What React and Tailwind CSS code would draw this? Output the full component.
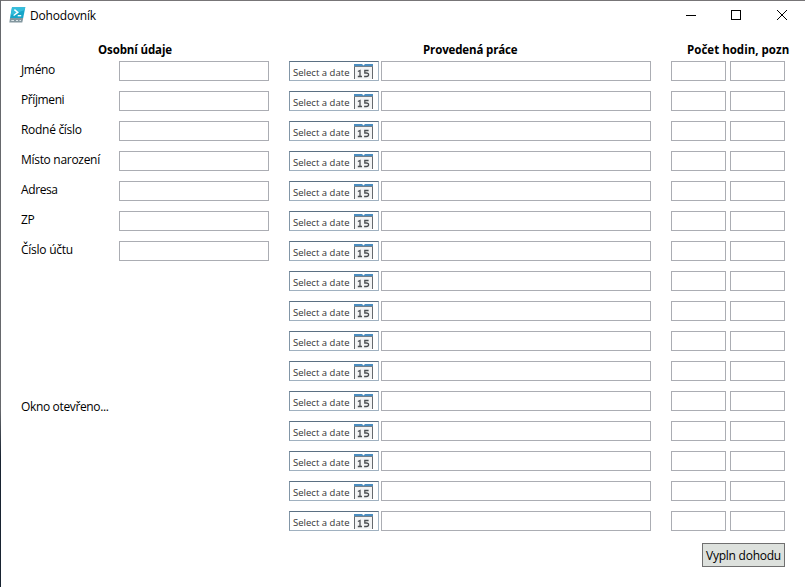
import React from "react";

const fields = [
  ["Jméno", "tracking-[-0.35px]"],
  ["Příjmeni", "tracking-[-0.4px]"],
  ["Rodné číslo", "tracking-[-0.3px]"],
  ["Místo narození", "tracking-[-0.3px]"],
  ["Adresa", "tracking-[-0.4px]"],
  ["ZP", "tracking-[-0.3px]"],
  ["Číslo účtu", "tracking-[-0.25px]"],
];
const rows = Array.from({ length: 16 }, (_, i) => i);

function Box({ className }) {
  return <div className={`h-5 shrink-0 border border-[#abadb3] bg-white ${className}`} />;
}

function PowerShellIcon() {
  return (
    <svg width="17" height="17" viewBox="0 0 17 17" className="-mt-px shrink-0">
      <path d="M3 0.3H16.3L14.2 11H1Z" fill="#16a5c8" />
      <path d="M3 0.3H16.3L15.7 3L1.8 8Z" fill="#35bddb" />
      <path d="M1 11H14.2L13.3 15.5H0.3Z" fill="#83979f" />
      <path d="M2.3 13.5H5M7 13.5H9M10.5 13.5H12" stroke="#dbe5e8" strokeWidth="1.2" />
      <path d="M5.4 2.6L8.8 5.4L4.6 8.5" fill="none" stroke="#fff" strokeWidth="1.4" />
      <path d="M8.7 8.7H12.2" stroke="#fff" strokeWidth="1.3" />
    </svg>
  );
}

function CalendarIcon() {
  return (
    <svg width="19" height="15" viewBox="0 0 19 15" className="mt-[2px] shrink-0">
      <rect x="0.5" y="2" width="18" height="13" fill="#f3f4f5" />
      <rect x="0" y="0" width="19" height="2" fill="#4a8dc0" />
      <path d="M8 0H11L9.5 1.6Z" fill="#fff" />
      <path d="M0.5 2V15M18.5 2V15" stroke="#65696d" />
      <path d="M0 2.5H19" stroke="#75818a" />
      <path d="M3.9 7.5L6 6.5V12.3M3.8 12.5H8" fill="none" stroke="#4d5053" strokeWidth="1.3" />
      <path d="M14.6 6.5H10.8V9H12.4C15.4 9 15.3 12.5 12.4 12.5H10.1" fill="none" stroke="#4d5053" strokeWidth="1.3" />
    </svg>
  );
}

function DatePicker() {
  return (
    <div className="flex h-5 w-[90px] shrink-0 items-start border border-t-[#5b7083] border-r-[#a4b5c4] border-b-[#a0b1c0] border-l-[#8296a7] bg-white pl-[3px]">
      <span className="mt-[4px] w-[61px] text-[9.5px] leading-[14px] tracking-[0.02px] whitespace-nowrap text-[#333]">Select a date</span>
      <CalendarIcon />
    </div>
  );
}

export default function App() {
  return (
    <div className="flex h-[587px] w-[805px] overflow-hidden bg-white font-['Open_Sans','Noto_Sans',sans-serif] text-[12px] text-black">
      <div className="w-px shrink-0 bg-linear-to-b from-[#66686c] from-70% to-[#182331] to-78%" />
      <div className="flex w-[804px] shrink-0 flex-col border-t border-[#777577]">
        <header className="flex h-[29px] shrink-0 items-center pl-2">
          <PowerShellIcon />
          <span className="ml-1 pt-px leading-4 tracking-[-0.18px]">Dohodovník</span>
          <svg width="126" height="29" viewBox="0 0 126 29" className="ml-auto" fill="none" stroke="#000" shapeRendering="crispEdges">
            <path d="M7 14.5H17" />
            <rect x="52.5" y="9.5" width="9" height="9" />
            <path d="M98 9L108 19M108 9L98 19" shapeRendering="auto" />
          </svg>
        </header>
        <div className="flex h-[31px] shrink-0 items-start pt-[12px] text-[11.5px] leading-4 font-bold whitespace-nowrap">
          <span className="ml-[97px] w-[325px] tracking-[-0.12px]">Osobní údaje</span>
          <span className="w-[264px] tracking-[-0.14px]">Provedená práce</span>
          <span className="tracking-[0.02px]">Počet hodin, pozn</span>
        </div>
        <main className="flex h-[470px] shrink-0 pl-5">
          <section className="flex w-[268px] shrink-0 flex-col gap-[10px]">
            {fields.map(([label, spacing]) => (
              <div key={label} className="flex h-5">
                <span className={`w-[98px] leading-[18px] whitespace-nowrap ${spacing}`}>{label}</span>
                <Box className="w-[150px]" />
              </div>
            ))}
            <p className="mt-[127px] leading-[18px] tracking-[-0.35px]">Okno otevřeno...</p>
          </section>
          <section className="flex flex-col gap-[10px]">
            {rows.map((row) => (
              <div key={row} className="flex h-5">
                <DatePicker />
                <Box className="ml-[2px] w-[270px]" />
                <Box className="ml-5 w-[55px]" />
                <Box className="ml-1 w-[55px]" />
              </div>
            ))}
          </section>
        </main>
        <footer className="flex justify-end pt-[12px] pr-5">
          <button className="flex h-6 w-[83px] items-center justify-center border border-[#707070] bg-[#dde1dd] pt-[2px] tracking-[-0.25px] whitespace-nowrap">Vypln dohodu</button>
        </footer>
      </div>
    </div>
  );
}
